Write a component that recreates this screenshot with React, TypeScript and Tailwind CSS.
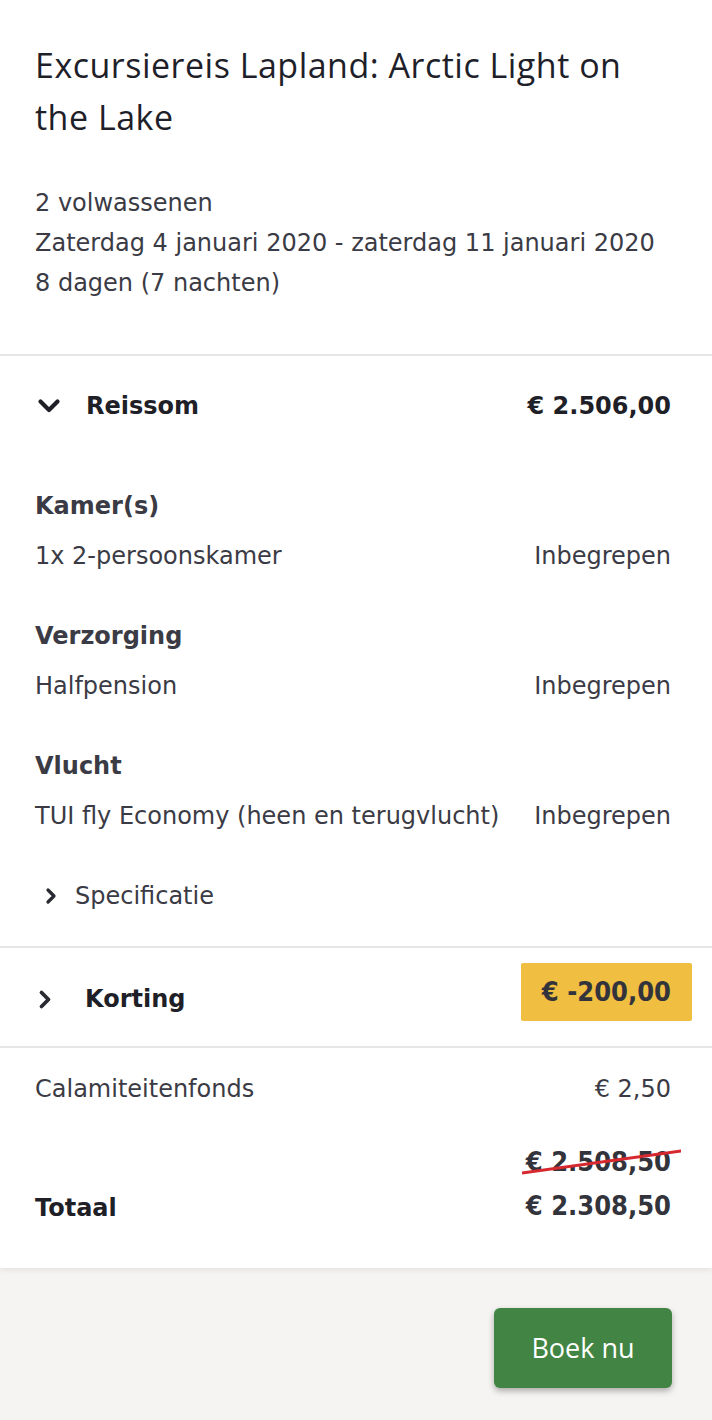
import React from 'react';

const body = { fontFamily: '"DejaVu Sans", Verdana, sans-serif' };
const heading = { fontFamily: '"Open Sans", "Noto Sans", sans-serif' };
const condensed = { fontFamily: '"DejaVu Sans Condensed", "DejaVu Sans", sans-serif' };

function ChevronDown() {
  return (
    <svg width="24" height="16" viewBox="0 0 24 16" className="shrink-0">
      <path d="M3.5 3.5l8.5 8.5 8.5-8.5" fill="none" stroke="#1f1f28" strokeWidth="4.2" strokeLinecap="round" strokeLinejoin="round" />
    </svg>
  );
}

function ChevronRight({ size = 14 }: { size?: number }) {
  return (
    <svg width={size} height={size * 1.5} viewBox="0 0 14 21" className="shrink-0">
      <path d="M3.5 3.5l7 7-7 7" fill="none" stroke="#2a2a33" strokeWidth="3.8" strokeLinecap="round" strokeLinejoin="round" />
    </svg>
  );
}

function Line({ label, value }: { label: string; value: string }) {
  return (
    <div className="flex justify-between items-center h-[50px] text-[24px] text-[#3b3b45]">
      <span>{label}</span>
      <span>{value}</span>
    </div>
  );
}

function Group({ title, label, first }: { title: string; label: string; first?: boolean }) {
  return (
    <div className={first ? 'pt-[25px]' : 'pt-[30px]'}>
      <div className="h-[50px] flex items-center text-[24px] font-bold text-[#3b3b45]">{title}</div>
      <Line label={label} value="Inbegrepen" />
    </div>
  );
}

export default function App() {
  return (
    <div className="min-h-[1420px] bg-[#f5f4f3]" style={body}>
      <div className="bg-white shadow-[0_2px_6px_rgba(0,0,0,0.08)]">
        <div className="pl-[35px] pr-[41px] pt-[39px] pb-[51px]">
          <h1 className="text-[34px] leading-[52px] tracking-[0.5px] text-[#1f1f2a] font-normal" style={heading}>
            Excursiereis Lapland: Arctic Light on the Lake
          </h1>
          <div className="mt-[40px] text-[24px] leading-[40px] text-[#3b3b45]">
            <div>2 volwassenen</div>
            <div>Zaterdag 4 januari 2020 - zaterdag 11 januari 2020</div>
            <div>8 dagen (7 nachten)</div>
          </div>
        </div>

        <div className="border-t-2 border-[#e6e6e6] pl-[35px] pr-[41px] pb-[25px]">
          <div className="flex items-center justify-between h-[100px]">
            <div className="flex items-center gap-[25px] pl-[2px]">
              <ChevronDown />
              <span className="text-[24px] font-bold text-[#1f1f28]">Reissom</span>
            </div>
            <span className="text-[24px] font-bold text-[#1f1f28]">€ 2.506,00</span>
          </div>
          <Group first title="Kamer(s)" label="1x 2-persoonskamer" />
          <Group title="Verzorging" label="Halfpension" />
          <Group title="Vlucht" label="TUI fly Economy (heen en terugvlucht)" />
          <div className="flex items-center gap-[18px] h-[50px] mt-[30px] pl-[10px] text-[24px] text-[#3b3b45]">
            <ChevronRight size={12} />
            <span>Specificatie</span>
          </div>
        </div>

        <div className="border-t-2 border-[#e6e6e6] flex items-center justify-between h-[100px] pl-[38px] pr-[20px]">
          <div className="flex items-center gap-[33px] mt-[4px]">
            <ChevronRight size={14} />
            <span className="text-[24px] font-bold text-[#1f1f28]">Korting</span>
          </div>
          <span className="bg-[#f0be40] rounded-[2px] h-[58px] px-[21px] flex items-center text-[27px] font-bold text-[#33333c] -mt-[10px]" style={condensed}>
            € -200,00
          </span>
        </div>

        <div className="border-t-2 border-[#e6e6e6] pl-[35px] pr-[41px] pt-[16px] pb-[40px]">
          <Line label="Calamiteitenfonds" value="€ 2,50" />
          <div className="flex justify-between items-end mt-[26px]">
            <span className="text-[24px] font-bold text-[#1f1f28] leading-[40px]">Totaal</span>
            <div className="flex flex-col items-end text-[27px] font-bold text-[#33333c] leading-[44px]" style={condensed}>
              <span className="relative">
                € 2.508,50
                <svg className="absolute left-[-4px] top-0 w-[calc(100%+14px)] h-full" viewBox="0 0 100 44" preserveAspectRatio="none">
                  <path d="M0 33L100 11" stroke="#d7282f" strokeWidth="3" vectorEffect="non-scaling-stroke" />
                </svg>
              </span>
              <span>€ 2.308,50</span>
            </div>
          </div>
        </div>
      </div>

      <div className="flex justify-end px-[40px] pt-[40px]">
        <button className="w-[178px] h-[80px] bg-[#428444] rounded-[6px] text-white text-[27px] font-medium shadow-[0_3px_6px_rgba(0,0,0,0.3)]" style={heading}>
          Boek nu
        </button>
      </div>
    </div>
  );
}
